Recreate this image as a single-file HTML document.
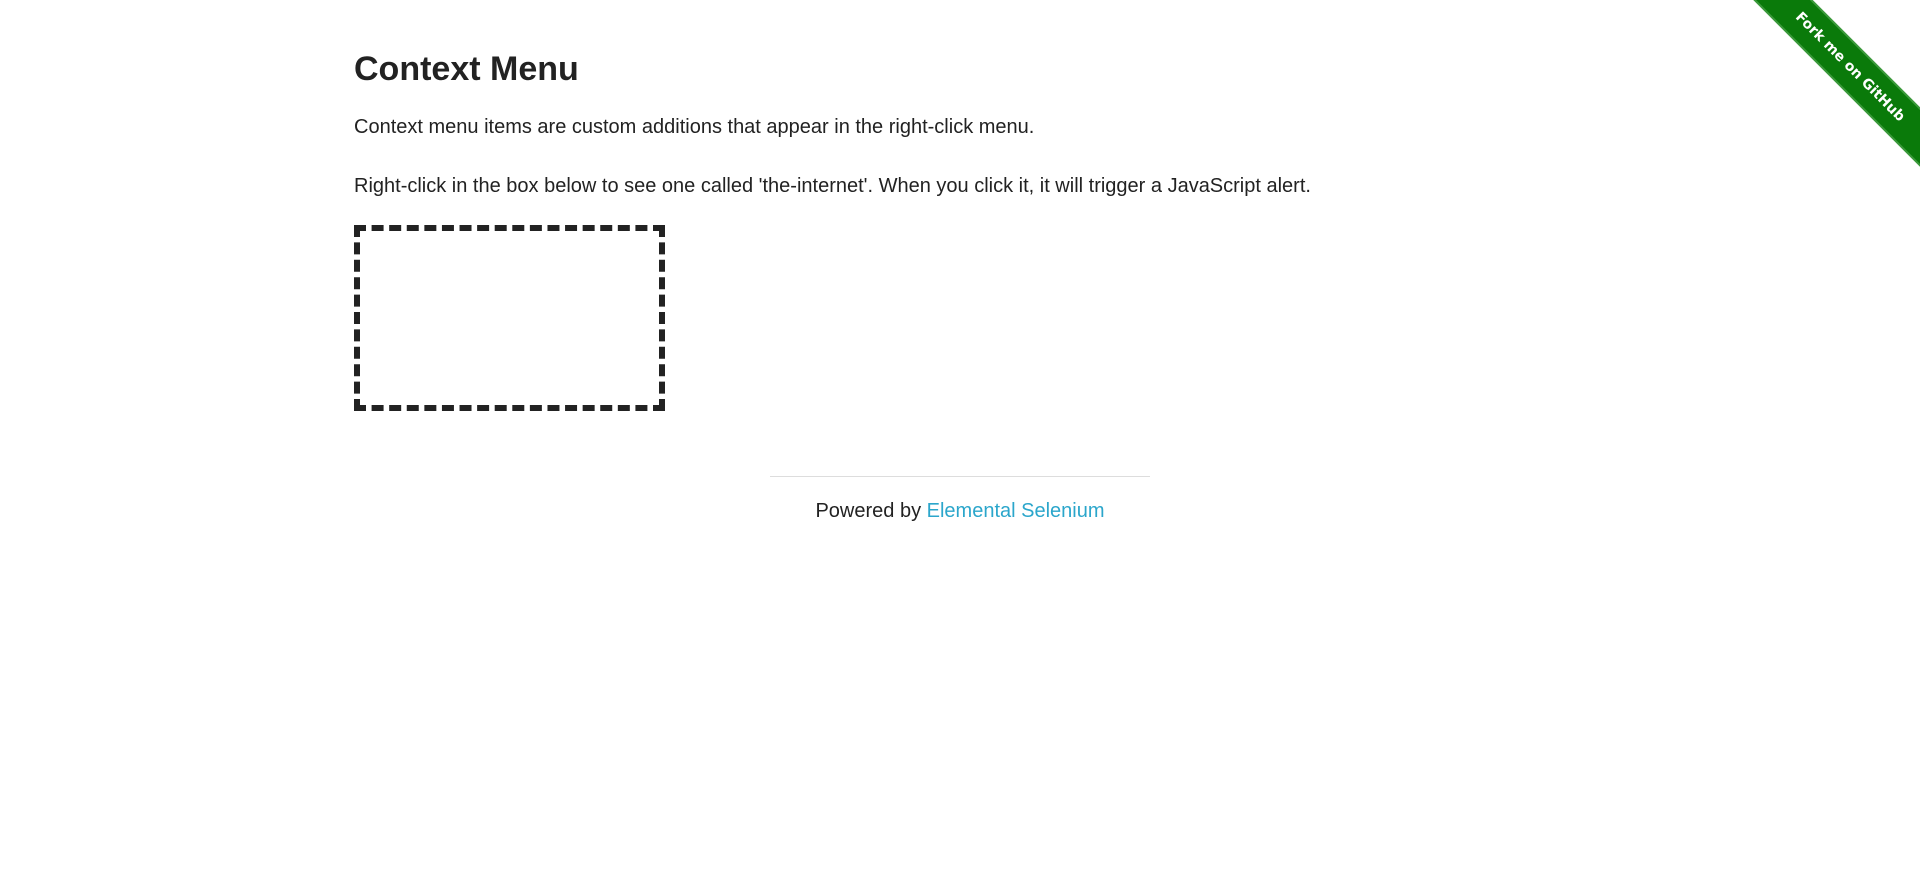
<!DOCTYPE html>
<html><head><style>
html,body{margin:0;padding:0;background:#fff;width:1920px;height:875px;overflow:hidden;position:relative;font-family:"Liberation Sans",Arial,sans-serif;color:#222}
h3{position:absolute;left:354px;top:49px;margin:0;font-size:34px;font-weight:bold;line-height:40px}
.p{position:absolute;left:354px;margin:0;font-size:20px;line-height:24px}
.box{position:absolute;left:354px;top:225px;width:299px;height:174px;border:6px dashed #222}
.hr{position:absolute;left:770px;top:476px;width:380px;height:1px;background:#ddd}
.f{position:absolute;left:0;width:1920px;text-align:center;top:499px;font-size:20px;line-height:24px}
.f a{color:#2ba6cb;text-decoration:none}
.rib{position:absolute;left:1700px;top:46px;width:300px;height:42px;background:#0a7a0a;transform:rotate(45deg);color:#fff;text-align:center;font:bold 14px/42px "DejaVu Sans",sans-serif;box-shadow:0 2px 0 0 #3c9a3c inset,0 -2px 0 0 #3c9a3c inset}
</style></head><body>
<h3>Context Menu</h3>
<p class="p" style="top:115px">Context menu items are custom additions that appear in the right-click menu.</p>
<p class="p" style="top:174px">Right-click in the box below to see one called 'the-internet'. When you click it, it will trigger a JavaScript alert.</p>
<div class="box"></div>
<div class="hr"></div>
<div class="f">Powered by <a>Elemental Selenium</a></div>
<div class="rib">Fork me on GitHub</div>
</body></html>
